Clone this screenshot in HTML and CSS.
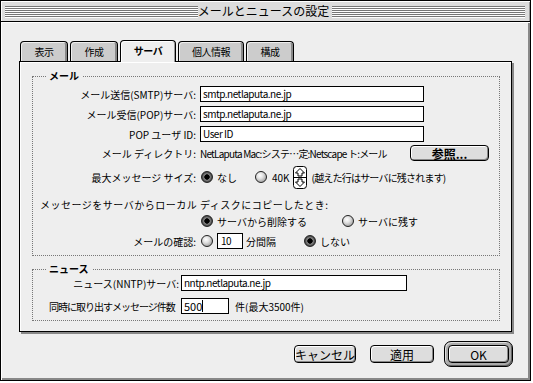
FILE: index.html
```html
<!DOCTYPE html>
<html lang="ja">
<head>
    <meta charset="UTF-8">
    <meta name="viewport" content="width=device-width, initial-scale=1.0">
    <title>メールとニュースの設定</title>
    <link rel="stylesheet" href="styles.css">
</head>
<body>
    <div class="window">
        <div class="titlebar">
            <div class="stripes"></div>
            <div class="title">メールとニュースの設定</div>
            <div class="stripes"></div>
        </div>

        <div class="content">
            <div class="tabs">
                <div class="tab">表示</div>
                <div class="tab">作成</div>
                <div class="tab active">サーバ</div>
                <div class="tab">個人情報</div>
                <div class="tab">構成</div>
            </div>

            <div class="panel">
                <div class="group mail">
                    <div class="legend">メール</div>

                    <div class="row first">
                        <span class="label">メール送信(SMTP)サーバ:</span>
                        <span class="field wide">smtp.netlaputa.ne.jp</span>
                    </div>
                    <div class="row">
                        <span class="label">メール受信(POP)サーバ:</span>
                        <span class="field wide">smtp.netlaputa.ne.jp</span>
                    </div>
                    <div class="row">
                        <span class="label">POP ユーザ ID:</span>
                        <span class="field wide">User ID</span>
                    </div>
                    <div class="row dir">
                        <span class="label">メール ディレクトリ:</span>
                        <span class="path">NetLaputa Mac:システ…定:Netscape ト:メール</span>
                        <span class="button browse">参照...</span>
                    </div>
                    <div class="row size">
                        <span class="label">最大メッセージ サイズ:</span>
                        <span class="choice none"><span class="radio on"></span>なし</span>
                        <span class="choice"><span class="radio"></span><span class="latin">40K</span></span>
                        <svg class="stepper" width="14" height="23" viewBox="0 0 14 23">
                            <rect x="0.5" y="0.5" width="13" height="22" rx="3" fill="#fff" stroke="#000"/>
                            <path d="M7 2.5 L11.5 7 H9 V10 H5 V7 H2.5 Z" fill="#fff" stroke="#000"/>
                            <line x1="1" y1="11.5" x2="13" y2="11.5" stroke="#000"/>
                            <path d="M7 20.5 L11.5 16 H9 V13 H5 V16 H2.5 Z" fill="#fff" stroke="#000"/>
                        </svg>
                        <span class="note">(越えた行はサーバに残されます)</span>
                    </div>
                    <div class="row copy">メッセージをサーバからローカル ディスクにコピーしたとき:</div>
                    <div class="row choices">
                        <span class="choice delete"><span class="radio on"></span>サーバから削除する</span>
                        <span class="choice"><span class="radio"></span>サーバに残す</span>
                    </div>
                    <div class="row check">
                        <span class="label">メールの確認:</span>
                        <span class="radio"></span>
                        <span class="field minutes">10</span>
                        <span class="unit">分間隔</span>
                        <span class="choice"><span class="radio on"></span>しない</span>
                    </div>
                </div>

                <div class="group news">
                    <div class="legend">ニュース</div>

                    <div class="row nntp">
                        <span class="label">ニュース(NNTP)サーバ:</span>
                        <span class="field server">nntp.netlaputa.ne.jp</span>
                    </div>
                    <div class="row count">
                        <span class="count-label">同時に取り出すメッセージ件数</span>
                        <span class="field num">500<span class="caret"></span></span>
                        <span class="unit">件(最大3500件)</span>
                    </div>
                </div>
            </div>

            <div class="buttons">
                <span class="button">キャンセル</span>
                <span class="button">適用</span>
                <span class="default-ring"><span class="button">OK</span></span>
            </div>
        </div>
    </div>
</body>
</html>
```

FILE: styles.css
```css
* {
    margin: 0;
    padding: 0;
    box-sizing: border-box;
}

body {
    background: #fff;
    color: #000;
    font-family: "Noto Sans CJK JP", "Noto Sans", sans-serif;
    font-size: 10px;
}

.window {
    width: 531px;
    height: 381px;
    border: 1px solid #000;
    background: #eee;
    display: flex;
    flex-direction: column;
}

/* title bar */
.titlebar {
    height: 21px;
    border-bottom: 1px solid #000;
    background: #ddd;
    box-shadow: inset 1px 1px #fff, inset -1px 0 #999;
    display: flex;
    align-items: center;
    padding: 0 5px 0 4px;
}

.stripes {
    flex: 1;
    height: 12px;
    margin-top: 1px;
    background: repeating-linear-gradient(#777 0 1px, #fff 1px 2px);
}

.title {
    font-size: 12px;
    line-height: 20px;
    padding: 0 3px 0 0;
}

.content {
    flex: 1;
    padding: 18px 0 0 18px;
    box-shadow: inset 1px 1px #fff, inset -2px -2px #888;
}

/* tabs */
.tabs {
    display: flex;
    align-items: flex-end;
    gap: 2px;
    height: 21px;
    margin-left: 1px;
}

.tab {
    width: 48px;
    height: 20px;
    border: 1px solid #000;
    border-bottom: none;
    border-radius: 4px 4px 0 0;
    background: #ccc;
    box-shadow: inset 1px 1px #eee, inset -2px 0 #888;
    text-align: center;
    line-height: 19px;
    letter-spacing: -0.5px;
}

.tab:nth-child(3) {
    width: 56px;
}

.tab:nth-child(4) {
    width: 66px;
}

.tab.active {
    height: 22px;
    margin-bottom: -1px;
    background: #eee;
    box-shadow: inset 1px 1px #fff, inset -1px 0 #999;
    font-weight: bold;
    position: relative;
    z-index: 1;
}

/* panel */
.panel {
    width: 493px;
    height: 271px;
    border: 1px solid #000;
    box-shadow: inset 1px 1px #fff, 2px 2px 0 #888;
    padding: 14px 0 0 12px;
}

.group {
    width: 468px;
    border: 1px dotted #777;
}

.mail {
    height: 180px;
}

.news {
    height: 52px;
    margin-top: 13px;
}

.legend {
    width: fit-content;
    margin: -7px 0 0 13px;
    padding: 0 3px;
    background: #eee;
    font-weight: bold;
    line-height: 12px;
}

.row {
    display: flex;
    align-items: center;
    height: 16px;
    margin-top: 4px;
    white-space: nowrap;
}

.label {
    width: 163px;
    margin-right: 4px;
    text-align: right;
    flex: none;
}

.field {
    height: 16px;
    border: 1px solid #000;
    background: #fff;
    padding-left: 2px;
    line-height: 14px;
    letter-spacing: -0.5px;
    display: flex;
    align-items: center;
}

.field.wide {
    width: 224px;
}

.path {
    letter-spacing: -0.8px;
}

.row.dir {
    margin-top: 3px;
}

.button {
    display: inline-flex;
    align-items: center;
    justify-content: center;
    height: 18px;
    border: 1px solid #000;
    border-radius: 4px;
    background: #ddd;
    box-shadow: inset 1px 1px #fff, inset -1px -1px #888;
    font-size: 12px;
}

.button.browse {
    width: 79px;
    height: 16px;
    margin-left: auto;
    margin-right: 10px;
    font-weight: bold;
}

.row.size {
    height: 22px;
    margin-top: 5px;
}

.choice {
    display: inline-flex;
    align-items: center;
    gap: 4px;
}

.choice.none {
    width: 54px;
    margin-left: 1px;
}

.latin {
    margin-left: 1px;
}

.radio {
    width: 12px;
    height: 12px;
    flex: none;
    border: 1px solid #222;
    border-radius: 50%;
    background: radial-gradient(circle at 40% 35%, #fff 0, #e2e2e2 35%, #9a9a9a 85%);
}

.radio.on {
    background: radial-gradient(circle, #000 0 2.4px, #8a8a8a 3px, #444 5px);
}

.stepper {
    margin-left: 3px;
    flex: none;
}

.note {
    margin-left: 5px;
    letter-spacing: -0.8px;
}

.row.copy {
    margin-top: 8px;
    padding-left: 7px;
    letter-spacing: 0.5px;
}

.row.choices {
    margin-top: 1px;
    padding-left: 168px;
}

.choice.delete {
    width: 141px;
}

.row.check .radio {
    margin-left: 1px;
}

.field.minutes {
    width: 26px;
    margin-left: 4px;
    padding-left: 3px;
}

.row.check .unit {
    width: 57px;
    margin-left: 3px;
}

/* news */
.row.nntp {
    margin-top: 0;
}

.nntp .label {
    width: 146px;
    margin-right: 2px;
}

.field.server {
    width: 226px;
}

.row.count {
    margin-top: 7px;
    padding-left: 16px;
}

.count-label {
    width: 132px;
    flex: none;
    letter-spacing: -1px;
}

.field.num {
    width: 48px;
    font-size: 11px;
    letter-spacing: 0;
}

.caret {
    width: 1px;
    height: 12px;
    background: #000;
}

.row.count .unit {
    margin-left: 6px;
}

/* dialog buttons */
.buttons {
    width: 494px;
    margin-top: 9px;
    display: flex;
    justify-content: flex-end;
    align-items: center;
    gap: 14px;
}

.buttons > .button:first-child {
    width: 62px;
}

.buttons > .button:nth-child(2) {
    width: 64px;
    margin-right: -4px;
}

.default-ring {
    width: 69px;
    height: 26px;
    border: 1px solid #000;
    border-radius: 7px;
    background: #aaa;
    box-shadow: inset 1px 1px #ddd, inset -1px -1px #666;
    display: flex;
    align-items: center;
    justify-content: center;
}

.default-ring .button {
    width: 61px;
}
```
